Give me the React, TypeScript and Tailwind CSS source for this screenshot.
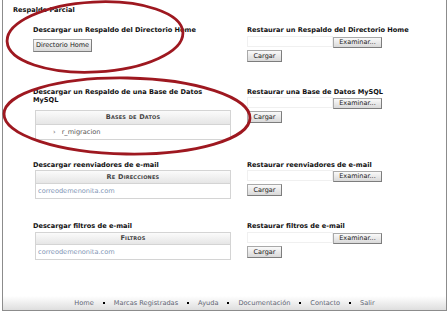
import React from "react";

const font = "font-['DejaVu_Sans',Verdana,sans-serif]";

const Btn = ({ label, className = "" }: { label: string; className?: string }) => (
  <div
    className={`flex items-center justify-center border border-[#a9a9a9] border-r-[#7d7d7d] border-b-[#7d7d7d] bg-gradient-to-b from-[#fafafa] to-[#d9d9d9] text-[6.5px] leading-none text-[#222] ${className}`}
  >
    {label}
  </div>
);

const Restore = ({ title, gap }: { title: string; gap: string }) => (
  <div className="flex flex-col">
    <div className="text-[6.6px] font-bold leading-[8px] text-[#111]">{title}</div>
    <div className={`flex items-start ${gap}`}>
      <div className="h-[11px] w-[86px] border border-[#f0f0f0] bg-white" />
      <Btn label="Examinar..." className="mt-[1px] h-[11px] w-[49px]" />
    </div>
    <Btn label="Cargar" className="mt-[2px] h-[12px] w-[35px]" />
  </div>
);

const DataTable = ({ head, children, headH }: { head: string; children: React.ReactNode; headH: string }) => (
  <div className="ml-[2px] w-[196px] border border-[#d4d4d4]">
    <div
      className={`flex items-center justify-center border-b border-[#d4d4d4] bg-gradient-to-b from-[#fbfbfb] to-[#e6e6e6] text-[6.6px] font-bold leading-none tracking-[0.2px] text-[#444] [font-variant:small-caps] ${headH}`}
    >
      {head}
    </div>
    <div className="flex h-[14px] items-center bg-white text-[6.6px] leading-none">{children}</div>
  </div>
);

const Link = () => <span className="pl-[2px] text-[#7f95b5]">correodemenonita.com</span>;

const footer = ["Home", "Marcas Registradas", "Ayuda", "Documentación", "Contacto", "Salir"];

export default function App() {
  return (
    <div className={`relative h-[313px] w-[448px] overflow-hidden bg-white ${font}`}>
      <div className="ml-[2px] flex h-[311px] w-[445px] flex-col border-x border-b border-[#8c8c8c]">
        <div className="pl-[10px] pt-[6px] text-[6.6px] font-bold leading-[8px] text-[#111]">Respaldo Parcial</div>

        <div className="mt-[12px] grid h-[62px] grid-cols-[214px_1fr] pl-[30px]">
          <div className="flex flex-col items-start">
            <div className="text-[6.6px] font-bold leading-[8px] text-[#111]">Descargar un Respaldo del Directorio Home</div>
            <Btn label="Directorio Home" className="mt-[5px] h-[13px] w-[59px]" />
          </div>
          <Restore title="Restaurar un Respaldo del Directorio Home" gap="mt-[2px]" />
        </div>

        <div className="grid h-[73px] grid-cols-[214px_1fr] pl-[30px]">
          <div className="flex flex-col">
            <div className="text-[6.6px] font-bold leading-[8px] text-[#111]">
              Descargar un Respaldo de una Base de Datos
              <br />
              MySQL
            </div>
            <div className="mt-[6px]">
              <DataTable head="Bases de Datos" headH="h-[14px]">
                <span className="pl-[17px] text-[#666]">›</span>
                <span className="pl-[6px] text-[#555]">r_migracion</span>
              </DataTable>
            </div>
          </div>
          <Restore title="Restaurar una Base de Datos MySQL" gap="mt-[1px]" />
        </div>

        <div className="grid h-[61px] grid-cols-[214px_1fr] pl-[30px]">
          <div className="flex flex-col">
            <div className="text-[6.6px] font-bold leading-[8px] text-[#111]">Descargar reenviadores de e-mail</div>
            <div className="mt-[1px]">
              <DataTable head="Re Direcciones" headH="h-[13px]">
                <Link />
              </DataTable>
            </div>
          </div>
          <Restore title="Restaurar reenviadores de e-mail" gap="mt-[1px]" />
        </div>

        <div className="grid grid-cols-[214px_1fr] pl-[30px]">
          <div className="flex flex-col">
            <div className="text-[6.6px] font-bold leading-[8px] text-[#111]">Descargar filtros de e-mail</div>
            <div className="mt-[2px]">
              <DataTable head="Filtros" headH="h-[12px]">
                <Link />
              </DataTable>
            </div>
          </div>
          <Restore title="Restaurar filtros de e-mail" gap="mt-[2px]" />
        </div>

        <div className="flex-1" />
        <div className="flex h-[14px] items-center justify-center gap-[9px] bg-gradient-to-b from-white to-[#dedede] text-[6.6px] leading-none text-[#5f6675]">
          {footer.map((f, i) => (
            <React.Fragment key={f}>
              {i > 0 && <span className="h-[2px] w-[2px] bg-black" />}
              <span>{f}</span>
            </React.Fragment>
          ))}
        </div>
      </div>

      {/* red hand-drawn marks */}
      <svg className="pointer-events-none absolute inset-0" width="448" height="313" viewBox="0 0 448 313">
        <ellipse cx="95" cy="37" rx="88" ry="35" transform="rotate(-3 95 37)" fill="none" stroke="#9e1820" strokeWidth="2.8" />
        <ellipse cx="127" cy="116" rx="123" ry="38" transform="rotate(1 127 116)" fill="none" stroke="#9e1820" strokeWidth="2.8" />
      </svg>
    </div>
  );
}
